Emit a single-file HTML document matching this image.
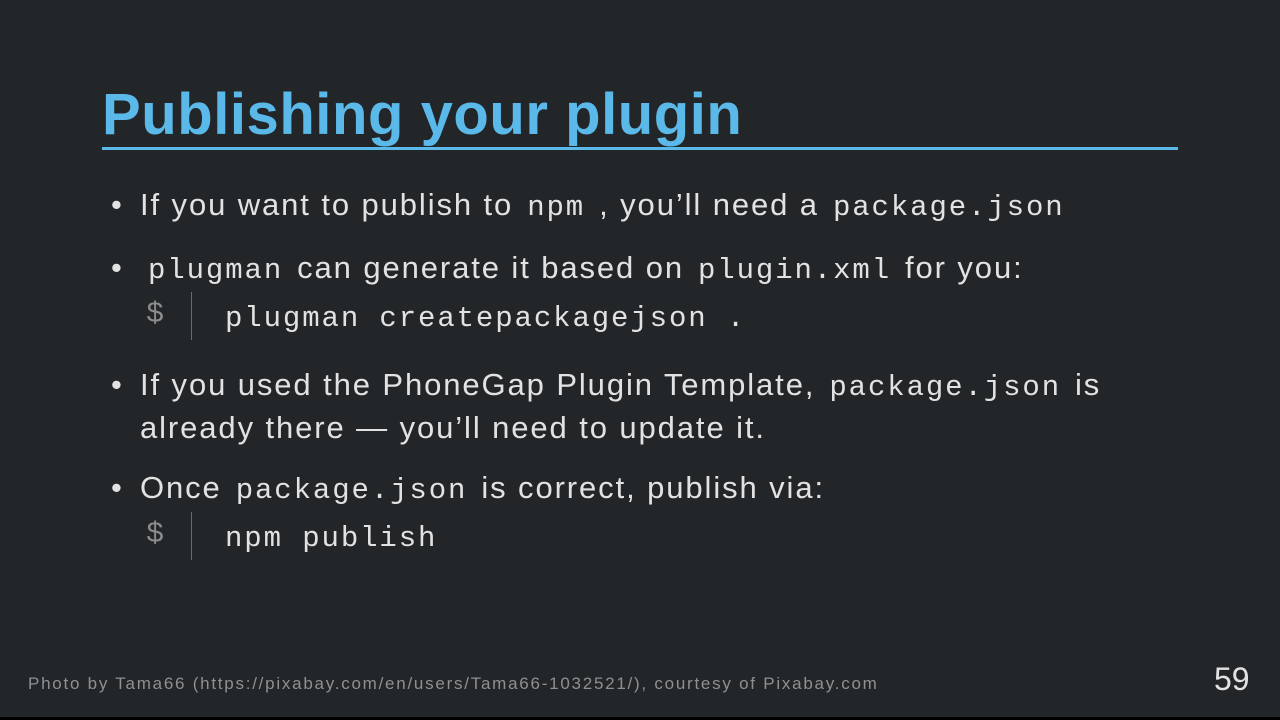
<!DOCTYPE html>
<html><head><meta charset="utf-8"><style>
body{margin:0;width:1280px;height:720px;background:#232628;overflow:hidden;position:relative;font-family:"Liberation Sans",sans-serif;color:#e2e2e2}
.a{position:absolute;white-space:nowrap}
h1{position:absolute;left:102px;top:80px;margin:0;font-size:58px;font-weight:bold;color:#5bb9ea;line-height:70px;letter-spacing:0.55px}
.rule{position:absolute;left:102px;top:147px;width:1076px;height:3px;background:#5bb9ea}
.t{font-size:31px;line-height:36px;letter-spacing:1.9px}
code{font-family:"Liberation Mono",monospace;font-size:29px;letter-spacing:1.9px;padding:0 14px;color:#e2e2e2}
.d{color:#8a8c8e;font-family:"Liberation Mono",monospace;font-size:30px}
.bar{position:absolute;width:1px;background:#6a6c6e}
</style></head><body>
<h1>Publishing your plugin</h1>
<div class="rule"></div>
<div class="a t" style="left:111px;top:187px">•</div>
<div class="a t" style="left:140px;top:187px">If you want to publish to<code>npm</code>, you’ll need a<code>package.json</code></div>
<div class="a t" style="left:111px;top:250px">•</div>
<div class="a t" style="left:140px;top:250px"><code style="padding-left:8px">plugman</code>can generate it based on<code>plugin.xml</code>for you:</div>
<div class="a d" style="left:146px;top:298px">$</div><div class="bar" style="left:191px;top:292px;height:48px"></div>
<div class="a t" style="left:225px;top:298px"><code style="padding:0">plugman createpackagejson .</code></div>
<div class="a t" style="left:111px;top:367px">•</div>
<div class="a t" style="left:140px;top:367px">If you used the PhoneGap Plugin Template,<code>package.json</code>is</div>
<div class="a t" style="left:140px;top:410px">already there — you’ll need to update it.</div>
<div class="a t" style="left:111px;top:470px">•</div>
<div class="a t" style="left:140px;top:470px">Once<code>package.json</code>is correct, publish via:</div>
<div class="a d" style="left:146px;top:518px">$</div><div class="bar" style="left:191px;top:512px;height:48px"></div>
<div class="a t" style="left:225px;top:518px"><code style="padding:0">npm publish</code></div>
<div class="a" style="left:28px;top:674px;font-size:17px;letter-spacing:1.75px;color:#8e9092">Photo by Tama66 (https://pixabay.com/en/users/Tama66-1032521/), courtesy of Pixabay.com</div>
<div class="a" style="left:1214px;top:661px;font-size:32px;color:#e2e2e2">59</div>
<div style="position:absolute;left:0;top:717px;width:1280px;height:3px;background:#000"></div>
</body></html>
